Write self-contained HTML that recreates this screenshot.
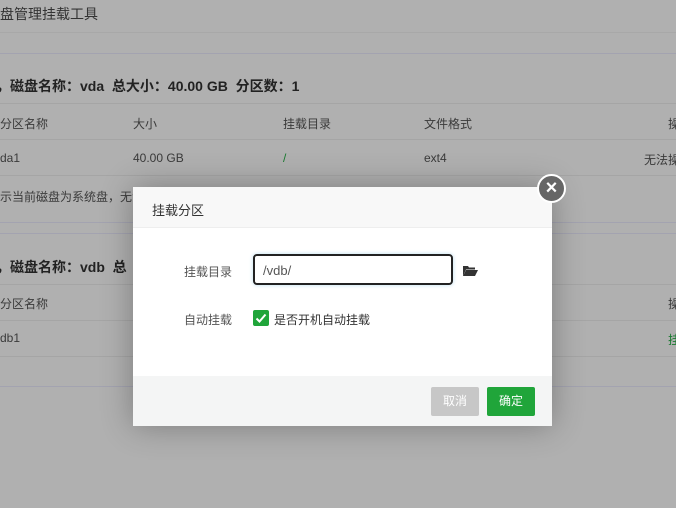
<!DOCTYPE html>
<html><head><meta charset="utf-8"><style>
*{margin:0;padding:0;box-sizing:border-box}
body{width:676px;height:508px;overflow:hidden;background:#b0b0b0;font-family:"Liberation Sans","Noto Sans CJK SC",sans-serif;font-size:12px;color:#3a3a3a;position:relative}
.a{position:absolute;white-space:nowrap}
.l{position:absolute;left:0;width:676px;height:1px;background:#a3a3b0}
.b{font-weight:bold;font-size:14px;color:#222}
.modal{position:absolute;left:133px;top:187px;width:419px;height:239px;background:#fff;box-shadow:0 0 30px rgba(0,0,0,.3)}
.hd{height:41px;background:#f8f8f8;border-bottom:1px solid #eee;padding:13px 0 0 19px;font-size:13px;color:#333}
.ft{position:absolute;left:0;top:189px;width:419px;height:50px;background:#f4f5f5}
.btn{position:absolute;top:11px;height:29px;width:48px;border-radius:2px;color:#fff;font-size:12px;text-align:center;line-height:29px}
</style></head><body>
<div class="a" style="left:0;top:4px;font-size:14px;color:#333">盘管理挂载工具</div>
<div class="l" style="top:32px;background:#a8a8a8"></div>
<div class="l" style="top:53px"></div>
<div class="a b" style="left:-4px;top:76px">，磁盘名称：vda&nbsp; 总大小：40.00 GB&nbsp; 分区数：1</div>
<div class="l" style="top:103px;background:#a5a5a5"></div>
<div class="a" style="left:0;top:115px">分区名称</div>
<div class="a" style="left:133px;top:115px">大小</div>
<div class="a" style="left:283px;top:115px">挂载目录</div>
<div class="a" style="left:424px;top:115px">文件格式</div>
<div class="a" style="left:668px;top:115px">操</div>
<div class="l" style="top:139px;background:#a5a5a5"></div>
<div class="a" style="left:0;top:151px">da1</div>
<div class="a" style="left:133px;top:151px">40.00 GB</div>
<div class="a" style="left:283px;top:151px;color:#1a7a30">/</div>
<div class="a" style="left:424px;top:151px">ext4</div>
<div class="a" style="left:644px;top:151px">无法操</div>
<div class="l" style="top:175px;background:#a5a5a5"></div>
<div class="a" style="left:0;top:188px">示当前磁盘为系统盘，无法</div>
<div class="l" style="top:222px"></div>
<div class="l" style="top:233px"></div>
<div class="a b" style="left:-4px;top:257px">，磁盘名称：vdb&nbsp; 总</div>
<div class="l" style="top:284px;background:#a5a5a5"></div>
<div class="a" style="left:0;top:295px">分区名称</div>
<div class="a" style="left:668px;top:295px">操</div>
<div class="l" style="top:320px;background:#a5a5a5"></div>
<div class="a" style="left:0;top:331px">db1</div>
<div class="a" style="left:668px;top:331px;color:#1a7a30">挂</div>
<div class="l" style="top:356px;background:#a5a5a5"></div>
<div class="l" style="top:386px"></div>

<div class="modal">
<div class="hd">挂载分区</div>
<div class="a" style="left:51px;top:76px;color:#555">挂载目录</div>
<div class="a" style="left:120px;top:67px;width:200px;height:31px;border:2px solid #222;border-radius:4px;box-shadow:0 0 4px #bde;padding:7px 0 0 8px;font-size:13px;color:#555">/vdb/</div>
<svg class="a" style="left:329px;top:77px" width="16" height="13" viewBox="0 0 16 13"><path d="M1 2h5l1 1.5h6v2H4L1 12z" fill="#333"/><path d="M4 6h12l-3 6H1z" fill="#333"/></svg>
<div class="a" style="left:51px;top:124px;color:#555">自动挂载</div>
<div class="a" style="left:120px;top:123px;width:16px;height:16px;background:#20a53a;border-radius:2px"><svg width="16" height="16"><path d="M3.5 8.5l3 3 6-7" stroke="#fff" stroke-width="2" fill="none"/></svg></div>
<div class="a" style="left:141px;top:124px;color:#333">是否开机自动挂载</div>
<div class="ft">
<div class="btn" style="left:298px;background:#c7c7c7">取消</div>
<div class="btn" style="left:354px;background:#20a53a">确定</div>
</div>
</div>
<div class="a" style="left:537px;top:174px;width:29px;height:29px;border-radius:50%;background:#666;border:2px solid #fff;color:#fff;text-align:center;line-height:24px;font-size:20px;font-weight:bold">×</div>
</body></html>
